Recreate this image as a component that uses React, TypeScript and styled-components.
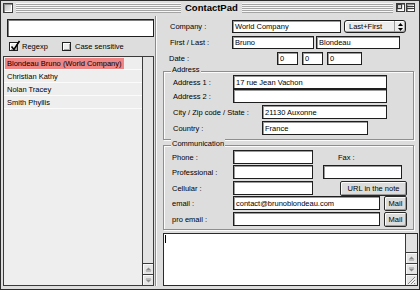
import React from "react";
import styled, { createGlobalStyle } from "styled-components";

const GlobalStyle = createGlobalStyle`
  html, body { margin: 0; padding: 0; background: #ffffff; }
  body { font-family: "Liberation Sans", Arial, sans-serif; }
  *, *::before, *::after { box-sizing: border-box; }
`;

const Window = styled.div`
  width: 420px;
  height: 290px;
  border: 1px solid #2b2b2b;
  background: #dddddd;
  display: flex;
  flex-direction: column;
  font-family: "Liberation Sans", Arial, sans-serif;
  font-size: 7.5px;
  line-height: 9px;
  color: #000;
  overflow: hidden;
`;

const TitleBar = styled.div`
  height: 15px;
  flex-shrink: 0;
  display: flex;
  align-items: flex-start;
  padding: 2px 4px 0 2px;
  background: #dedede;
`;

const WinButton = styled.div<{ $size: number; $ml?: number }>`
  width: ${(p) => p.$size}px;
  height: ${(p) => p.$size}px;
  margin-left: ${(p) => p.$ml ?? 0}px;
  flex-shrink: 0;
  border: 1px solid #3c3c3c;
  background: linear-gradient(135deg, #bfbfbf 0%, #f4f4f4 100%);
  box-shadow: inset 1px 1px 0 #8d8d8d, inset -1px -1px 0 #ffffff;
  display: flex;
  align-items: center;
  justify-content: center;
`;

const Stripes = styled.div<{ $w?: number; $ml?: number }>`
  height: 10px;
  ${(p) => (p.$w ? `width: ${p.$w}px; flex-shrink: 0;` : "flex: 1;")}
  margin-left: ${(p) => p.$ml ?? 0}px;
  background: repeating-linear-gradient(
    to bottom,
    #f7f7f7 0px,
    #f7f7f7 1px,
    #a4a4a4 1px,
    #a4a4a4 2px
  );
`;

const Title = styled.div`
  padding: 0 4px;
  height: 10px;
  line-height: 10px;
  font-size: 9.5px;
  font-weight: bold;
  white-space: nowrap;
`;

const Body = styled.div`
  flex: 1;
  min-height: 0;
  display: flex;
  padding: 0 1px 3px 2px;
`;

const LeftPane = styled.div`
  width: 151px;
  flex-shrink: 0;
  display: flex;
  flex-direction: column;
`;

const SearchField = styled.div`
  margin: 3px 0 0 4px;
  width: 147px;
  height: 18px;
  flex-shrink: 0;
  background: #ffffff;
  border: 1px solid #1e1e1e;
  box-shadow: inset 1px 1px 0 #7e7e7e;
`;

const CheckRow = styled.div`
  margin-top: 5px;
  height: 9px;
  flex-shrink: 0;
  padding-left: 6px;
  display: flex;
  align-items: center;
`;

const CheckItem = styled.div<{ $w?: number }>`
  display: flex;
  align-items: center;
  gap: 4px;
  ${(p) => (p.$w ? `width: ${p.$w}px;` : "")}
  white-space: nowrap;
`;

const CheckBox = styled.div`
  position: relative;
  width: 9px;
  height: 9px;
  flex-shrink: 0;
  border: 1px solid #222;
  background: #eeeeee;
  box-shadow: inset 1px 1px 0 #ffffff, inset -1px -1px 0 #a8a8a8;
`;

const CheckMark = styled.svg`
  position: absolute;
  left: 0px;
  top: -3px;
`;

const List = styled.div`
  margin-top: 5px;
  flex: 1;
  min-height: 0;
  display: flex;
  border: 1px solid #3a3a3a;
  background: #eeeeee;
`;

const ListRows = styled.div`
  flex: 1;
  display: flex;
  flex-direction: column;
`;

const ListRow = styled.div`
  height: 13px;
  flex-shrink: 0;
  border-bottom: 1px solid #fbfbfb;
  padding-left: 1px;
  display: flex;
  align-items: center;
`;

const RowName = styled.span<{ $selected?: boolean }>`
  height: 11px;
  line-height: 11px;
  padding: 0 2px;
  white-space: nowrap;
  background: ${(p) => (p.$selected ? "#f08585" : "transparent")};
`;

const ScrollBar = styled.div<{ $w: number }>`
  width: ${(p) => p.$w}px;
  flex-shrink: 0;
  border-left: 1px solid #3a3a3a;
  background: #e3e3e3;
  display: flex;
  flex-direction: column;
`;

const ScrollTrack = styled.div`
  flex: 1;
`;

const ScrollCell = styled.div`
  height: 11px;
  flex-shrink: 0;
  border-top: 1px solid #3a3a3a;
  display: flex;
  align-items: center;
  justify-content: center;
  background: #e6e6e6;
  box-shadow: inset 1px 1px 0 #fafafa;
`;

const Divider = styled.div`
  margin-left: 1px;
  width: 2px;
  flex-shrink: 0;
  border-left: 1px solid #8a8a8a;
  border-right: 1px solid #fafafa;
`;

const RightPane = styled.div`
  flex: 1;
  min-width: 0;
  display: flex;
  flex-direction: column;
`;

const FormRow = styled.div<{ $mt?: number; $pl?: number; $h?: number }>`
  display: flex;
  align-items: center;
  flex-shrink: 0;
  height: ${(p) => p.$h ?? 13}px;
  margin-top: ${(p) => p.$mt ?? 0}px;
  padding-left: ${(p) => p.$pl ?? 0}px;
`;

const Label = styled.span<{ $w?: number; $ml?: number }>`
  ${(p) => (p.$w ? `width: ${p.$w}px;` : "")}
  margin-left: ${(p) => p.$ml ?? 0}px;
  flex-shrink: 0;
  white-space: nowrap;
`;

const Field = styled.div<{ $w: number; $ml?: number; $h?: number }>`
  width: ${(p) => p.$w}px;
  height: ${(p) => p.$h ?? 14}px;
  margin-left: ${(p) => p.$ml ?? 0}px;
  flex-shrink: 0;
  background: #ffffff;
  border: 1px solid #1e1e1e;
  box-shadow: inset 1px 1px 0 #9a9a9a;
  padding-left: 2px;
  display: flex;
  align-items: center;
  white-space: nowrap;
  overflow: hidden;
`;

const Popup = styled.div`
  margin-left: 3px;
  width: 62px;
  height: 13px;
  flex-shrink: 0;
  display: flex;
  align-items: center;
  border: 1px solid #1e1e1e;
  border-radius: 3px;
  background: #ececec;
  box-shadow: inset 1px 1px 0 #ffffff, inset -1px -1px 0 #a8a8a8;
`;

const PopupText = styled.span`
  flex: 1;
  padding-left: 4px;
  white-space: nowrap;
`;

const PopupArrows = styled.span`
  width: 11px;
  height: 100%;
  border-left: 1px solid #9a9a9a;
  display: flex;
  align-items: center;
  justify-content: center;
`;

const Group = styled.div<{ $mt: number; $h: number; $pt: number; $pl: number }>`
  position: relative;
  flex-shrink: 0;
  margin: ${(p) => p.$mt}px 0 0 6px;
  width: 251px;
  height: ${(p) => p.$h}px;
  border: 1px solid #8e8e8e;
  box-shadow: inset 1px 1px 0 #fbfbfb, 1px 1px 0 #fbfbfb;
  padding: ${(p) => p.$pt}px 0 0 ${(p) => p.$pl}px;
`;

const Legend = styled.span`
  position: absolute;
  top: -7px;
  left: 7px;
  padding: 0 1px;
  background: #dddddd;
  line-height: 9px;
  white-space: nowrap;
`;

const PushButton = styled.div<{ $w: number; $ml: number }>`
  width: ${(p) => p.$w}px;
  height: 15px;
  margin-left: ${(p) => p.$ml}px;
  flex-shrink: 0;
  border: 1px solid #2a2a2a;
  border-radius: 2px;
  background: #dcdcdc;
  box-shadow: inset 1px 1px 0 #fafafa, inset -1px -1px 0 #9a9a9a;
  display: flex;
  align-items: center;
  justify-content: center;
  white-space: nowrap;
`;

const Note = styled.div`
  margin: 3px 0 0 6px;
  flex: 1;
  min-height: 0;
  display: flex;
  border: 1px solid #2a2a2a;
  background: #ffffff;
`;

const NoteText = styled.div`
  flex: 1;
  padding: 1px 0 0 1px;
`;

const Caret = styled.div`
  width: 1px;
  height: 8px;
  background: #000;
`;

const UpArrow = () => (
  <svg width="7" height="5" viewBox="0 0 7 5">
    <polygon points="0.5,3.5 3.5,0.5 6.5,3.5" fill="#8c8c8c" />
    <rect x="1" y="4" width="5" height="1" fill="#bdbdbd" />
  </svg>
);

const DownArrow = () => (
  <svg width="7" height="5" viewBox="0 0 7 5">
    <rect x="1" y="0" width="5" height="1" fill="#bdbdbd" />
    <polygon points="0.5,1.5 3.5,4.5 6.5,1.5" fill="#8c8c8c" />
  </svg>
);

const GrowBox = () => (
  <svg width="9" height="9" viewBox="0 0 9 9">
    <path d="M1 8 L8 1" stroke="#8a8a8a" strokeWidth="1" />
    <path d="M2 8.5 L8.5 2" stroke="#ffffff" strokeWidth="1" />
    <path d="M4 8 L8 4" stroke="#8a8a8a" strokeWidth="1" />
    <path d="M5 8.5 L8.5 5" stroke="#ffffff" strokeWidth="1" />
    <path d="M7 8 L8 7" stroke="#8a8a8a" strokeWidth="1" />
  </svg>
);

const people = [
  "Blondeau Bruno (World Company)",
  "Christian Kathy",
  "Nolan Tracey",
  "Smith Phyllis",
];

export default function App() {
  return (
    <>
      <GlobalStyle />
      <Window>
        <TitleBar>
          <WinButton $size={10} />
          <Stripes $w={165} $ml={3} />
          <Title>ContactPad</Title>
          <Stripes />
          <WinButton $size={9} $ml={3}>
            <svg width="7" height="7" viewBox="0 0 7 7">
              <rect x="0.5" y="0.5" width="4" height="4" fill="none" stroke="#3c3c3c" />
            </svg>
          </WinButton>
          <WinButton $size={9} $ml={1}>
            <svg width="7" height="7" viewBox="0 0 7 7">
              <rect x="0" y="2.5" width="7" height="2" fill="none" stroke="#3c3c3c" />
            </svg>
          </WinButton>
        </TitleBar>
        <Body>
          <LeftPane>
            <SearchField />
            <CheckRow>
              <CheckItem $w={53}>
                <CheckBox>
                  <CheckMark width="11" height="11" viewBox="0 0 11 11">
                    <path d="M1.5 6.5 L4 9.5 L9.5 1" stroke="#000" strokeWidth="1.6" fill="none" />
                  </CheckMark>
                </CheckBox>
                <span>Regexp</span>
              </CheckItem>
              <CheckItem>
                <CheckBox />
                <span>Case sensitive</span>
              </CheckItem>
            </CheckRow>
            <List>
              <ListRows>
                {people.map((name, i) => (
                  <ListRow key={name}>
                    <RowName $selected={i === 0}>{name}</RowName>
                  </ListRow>
                ))}
              </ListRows>
              <ScrollBar $w={11}>
                <ScrollTrack />
                <ScrollCell>
                  <UpArrow />
                </ScrollCell>
                <ScrollCell>
                  <DownArrow />
                </ScrollCell>
              </ScrollBar>
            </List>
          </LeftPane>
          <Divider />
          <RightPane>
            <FormRow $mt={4} $pl={13} $h={13}>
              <Label $w={62}>Company :</Label>
              <Field $w={109} $h={13}>World Company</Field>
              <Popup>
                <PopupText>Last+First</PopupText>
                <PopupArrows>
                  <svg width="5" height="8" viewBox="0 0 5 8">
                    <polygon points="0,3 2.5,0 5,3" fill="#000" />
                    <polygon points="0,5 2.5,8 5,5" fill="#000" />
                  </svg>
                </PopupArrows>
              </Popup>
            </FormRow>
            <FormRow $mt={3} $pl={13} $h={13}>
              <Label $w={62}>First / Last :</Label>
              <Field $w={82} $h={13}>Bruno</Field>
              <Field $w={84} $h={13} $ml={2}>Blondeau</Field>
            </FormRow>
            <FormRow $mt={3} $pl={12} $h={13}>
              <Label $w={108}>Date :</Label>
              <Field $w={21} $h={13}>0</Field>
              <Field $w={21} $h={13} $ml={4}>0</Field>
              <Field $w={35} $h={13} $ml={4}>0</Field>
            </FormRow>
            <Group $mt={6} $h={69} $pt={3} $pl={9}>
              <Legend>Address</Legend>
              <FormRow $h={14}>
                <Label $w={60}>Address 1 :</Label>
                <Field $w={154}>17 rue Jean Vachon</Field>
              </FormRow>
              <FormRow $h={14}>
                <Label $w={60}>Address 2 :</Label>
                <Field $w={154} />
              </FormRow>
              <FormRow $h={14} $mt={2}>
                <Label $w={89}>City / Zip code / State :</Label>
                <Field $w={125}>21130 Auxonne</Field>
              </FormRow>
              <FormRow $h={14} $mt={2}>
                <Label $w={89}>Country :</Label>
                <Field $w={106}>France</Field>
              </FormRow>
            </Group>
            <Group $mt={5} $h={85} $pt={4} $pl={8}>
              <Legend>Communication</Legend>
              <FormRow $h={14}>
                <Label $w={61}>Phone :</Label>
                <Field $w={80} />
                <Label $ml={25}>Fax :</Label>
              </FormRow>
              <FormRow $h={14} $mt={1}>
                <Label $w={61}>Professional :</Label>
                <Field $w={80} />
                <Field $w={79} $ml={10} />
              </FormRow>
              <FormRow $h={14} $mt={2}>
                <Label $w={61}>Cellular :</Label>
                <Field $w={80} />
                <PushButton $w={67} $ml={27}>URL in the note</PushButton>
              </FormRow>
              <FormRow $h={14} $mt={1}>
                <Label $w={61}>email :</Label>
                <Field $w={147}>contact@brunoblondeau.com</Field>
                <PushButton $w={23} $ml={4}>Mail</PushButton>
              </FormRow>
              <FormRow $h={14} $mt={2}>
                <Label $w={61}>pro email :</Label>
                <Field $w={147} />
                <PushButton $w={23} $ml={4}>Mail</PushButton>
              </FormRow>
            </Group>
            <Note>
              <NoteText>
                <Caret />
              </NoteText>
              <ScrollBar $w={12}>
                <ScrollTrack />
                <ScrollCell>
                  <UpArrow />
                </ScrollCell>
                <ScrollCell>
                  <DownArrow />
                </ScrollCell>
                <ScrollCell>
                  <GrowBox />
                </ScrollCell>
              </ScrollBar>
            </Note>
          </RightPane>
        </Body>
      </Window>
    </>
  );
}
